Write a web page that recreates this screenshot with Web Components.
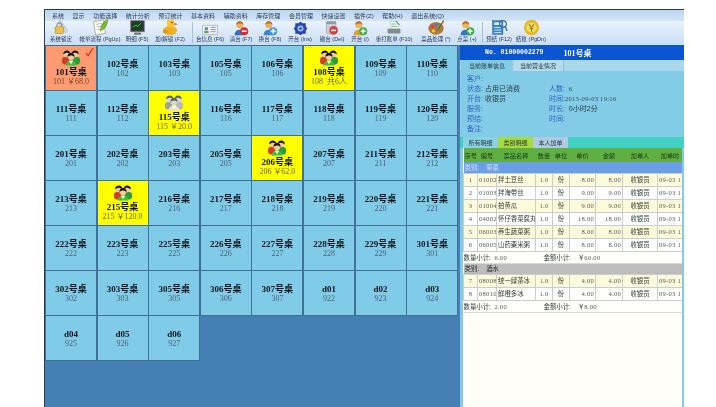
<!DOCTYPE html>
<html lang="zh">
<head>
<meta charset="utf-8">
<title>餐饮管理系统</title>
<style>
    html, body { margin: 0; padding: 0; background: #fff; }
    body { height: 407px; overflow: hidden; font-family: "Liberation Serif", "Noto Sans CJK SC", serif; }
</style>
</head>
<body>
<pos-app></pos-app>
<script>
const FONT = '"Liberation Sans", "Noto Sans CJK SC", sans-serif';
const TITLE_FONT = '"Liberation Serif", "Noto Sans CJK SC", serif';

function peopleIcon(grey) {
    const hair = grey ? '#5c5c5c' : '#141414';
    const skin = grey ? '#d8d8d8' : '#f3c9a0';
    const left = grey ? '#a0a0a0' : '#d8392a';
    const right = grey ? '#b8b8b8' : '#2e9b3a';
    const mid = grey ? '#e2e2e2' : '#3cc03c';
    return `<svg viewBox="1 1 20 19" width="18" height="17">
        <ellipse cx="5" cy="14" rx="4.2" ry="4.4" fill="${left}"/>
        <ellipse cx="17" cy="14" rx="4.2" ry="4.4" fill="${right}"/>
        <circle cx="6" cy="6.5" r="3.6" fill="${skin}"/>
        <path d="M2.2 7 C2.2 1.5 10 1.5 10 6 C7.6 4.6 4.6 5 2.2 7Z" fill="${hair}"/>
        <circle cx="16" cy="6.5" r="3.6" fill="${skin}"/>
        <path d="M12 6 C12 1.5 19.8 1.5 19.8 7 C17.4 5 14.4 4.6 12 6Z" fill="${hair}"/>
        <path d="M5 19.5 C5 12 17 12 17 19.5Z" fill="${mid}"/>
        <path d="M8.5 14 L11 18 L13.5 14Z" fill="${grey ? '#fff' : '#e8f8d0'}"/>
        <circle cx="11" cy="9.5" r="3.7" fill="${skin}"/>
        <path d="M7 10 C6.6 3.6 15.4 3.6 15 10 C13 7.8 9.6 7.6 7 10Z" fill="${hair}"/>
    </svg>`;
}

function personIcon(coat, badge, mark) {
    return `<svg viewBox="0 0 20 20" width="16" height="16">
        <path d="M2 19 C2 10 15 10 15 19Z" fill="${coat}"/>
        <circle cx="8.5" cy="6" r="4.4" fill="#f0b060"/>
        <path d="M4 6 C4 0 13 0 13 6 C11 4 7 4 4 6Z" fill="#b87020"/>
        <circle cx="14" cy="14" r="5" fill="${badge}"/>
        <rect x="11" y="13" width="6" height="2" fill="#fff"/>
        ${mark ? '<rect x="13" y="11" width="2" height="6" fill="#fff"/>' : ''}
    </svg>`;
}

const TOOL_ICONS = {
    lock: `<svg viewBox="0 0 20 20" width="18" height="17"><path d="M9 1 L18 14 L15 16 L7 5Z" fill="#d6dde6" stroke="#98a4b2" stroke-width=".6"/><path d="M5 9 C5 3 11 3 11 9" fill="none" stroke="#8a8a8a" stroke-width="1.4"/><rect x="3" y="9" width="10" height="8" rx="1" fill="#efbf45" stroke="#a9801f" stroke-width=".6"/></svg>`,
    bill: `<svg viewBox="0 0 20 20" width="18" height="18"><path d="M3 4 L14 2 L16 17 L5 19Z" fill="#fbfbf0" stroke="#8c8c7a" stroke-width=".7"/><path d="M6 7 L12 6 M6.5 10 L12.5 9 M7 13 L13 12" stroke="#8a9ab0" stroke-width=".7"/><path d="M10 15 C10 8 14 3 19 1 C19 8 15 13 10 15Z" fill="#5fae2e"/><path d="M11 14 L18 2" stroke="#e6b830" stroke-width=".9"/></svg>`,
    detail: `<svg viewBox="0 0 20 20" width="17" height="17"><rect x="2" y="2" width="16" height="13" fill="#3b3b3b" stroke="#777" stroke-width=".8"/><rect x="4" y="4" width="12" height="9" fill="#14401f"/><path d="M5 10 L8 7 L10 9 L14 5" fill="none" stroke="#55e070" stroke-width="1.1"/><rect x="6" y="16" width="8" height="2.4" fill="#6c6c6c"/></svg>`,
    duck: `<svg viewBox="0 0 20 20" width="18" height="18"><ellipse cx="10" cy="14" rx="8" ry="5" fill="#f0b020"/><circle cx="11" cy="6" r="4.5" fill="#f6c430"/><path d="M15 5.5 L19 7 L15 8Z" fill="#e0641c"/><circle cx="12.2" cy="5" r=".8" fill="#222"/><ellipse cx="5" cy="15" rx="3" ry="2" fill="#e09018"/></svg>`,
    info: `<svg viewBox="0 0 22 18" width="16" height="13"><rect x="1" y="3" width="20" height="13" fill="#eef1f4" stroke="#8c99a8" stroke-width=".7"/><circle cx="6" cy="8" r="2.4" fill="#5a88b8"/><rect x="3" y="11" width="6" height="3" fill="#6ba050"/><path d="M12 6 H19 M12 9 H19 M12 12 H19" stroke="#6c7c90" stroke-width="1"/></svg>`,
    clear: personIcon('#2f6fc4', '#d92c2c', false),
    swap: personIcon('#3f80d0', '#3f9be0', true),
    open: `<svg viewBox="0 0 20 20" width="15" height="15"><path d="M10 1 L13 3 L17 3 L17 7 L19 10 L17 13 L17 17 L13 17 L10 19 L7 17 L3 17 L3 13 L1 10 L3 7 L3 3 L7 3Z" fill="#2b46b0"/><circle cx="10" cy="10" r="4" fill="#9fc4f0"/><circle cx="10" cy="10" r="1.8" fill="#2b46b0"/></svg>`,
    cancel: `<svg viewBox="0 0 20 20" width="16" height="16"><rect x="3" y="2" width="12" height="15" rx="1" fill="#c9ced6" stroke="#8b909a" stroke-width=".6"/><rect x="3" y="2" width="12" height="3" fill="#8f99a8"/><circle cx="12" cy="13" r="5.4" fill="#d9423a"/><rect x="9" y="12" width="6" height="2" fill="#fff"/></svg>`,
    open2: personIcon('#e0a030', '#3fae3a', true),
    print: `<svg viewBox="0 0 20 20" width="16" height="16"><path d="M5 2 L14 2 L16 11 L7 11Z" fill="#fdfdfd" stroke="#98a098" stroke-width=".6"/><path d="M7 5 H13 M7.5 8 H14" stroke="#3e9a4a" stroke-width=".9"/><rect x="2" y="11" width="16" height="6" rx="1" fill="#7f8c90"/><path d="M12 1 L17 6" stroke="#5aa860" stroke-width="1.4"/></svg>`,
    dish: `<svg viewBox="0 0 20 20" width="18" height="17"><ellipse cx="10" cy="11" rx="9" ry="7.5" fill="#b07a3c"/><circle cx="6" cy="9" r="1.8" fill="#e33"/><circle cx="10" cy="7" r="1.8" fill="#3a7fe0"/><circle cx="14" cy="9" r="1.8" fill="#4cb84c"/><circle cx="7" cy="14" r="1.8" fill="#f2d030"/><path d="M12 13 L19 2" stroke="#8a5a28" stroke-width="1.6"/></svg>`,
    order: personIcon('#3274c8', '#35b040', true),
    pre: `<svg viewBox="0 0 20 20" width="17" height="17"><rect x="2" y="2" width="12" height="16" fill="#3a8ac8" stroke="#1f5a90" stroke-width=".6"/><rect x="4" y="4" width="8" height="3" fill="#e6f2fb"/><path d="M4 10 H12 M4 13 H12 M4 16 H12" stroke="#e6f2fb" stroke-width="1"/><circle cx="14" cy="6" r="4" fill="none" stroke="#3a6f9c" stroke-width="1.5"/><path d="M16.5 9 L19 14" stroke="#3a6f9c" stroke-width="1.6"/></svg>`,
    pay: `<svg viewBox="0 0 20 20" width="17" height="17"><circle cx="10" cy="10" r="9" fill="#e8b820"/><circle cx="10" cy="10" r="6" fill="#f8dc70"/><path d="M7 6 L10 10 L13 6 M10 10 V15 M7.5 11 H12.5" fill="none" stroke="#a87810" stroke-width="1.2"/></svg>`
};

class PosMenu extends HTMLElement {
    constructor() {
        super();
        this.attachShadow({mode: 'open'});
        const items = ['系统', '显示', '功能选择', '统计分析', '预订统计', '基本资料', '辅助资料', '库存管理', '会员管理', '快速设置', '插件(Z)', '帮助(H)', '退出系统(Q)'];
        this.shadowRoot.innerHTML = `
            <style>
                :host {
                    display: flex;
                    height: 11px;
                    flex: none;
                    align-items: center;
                    gap: 8.6px;
                    padding-left: 7px;
                    background: linear-gradient(#bcd6f0, #d3e5f8);
                    font: 6px ${FONT};
                    color: #2a3a58;
                    white-space: nowrap;
                }
            </style>
            ${items.map(t => `<span>${t}</span>`).join('')}
        `;
    }
}

class PosTool extends HTMLElement {
    constructor() {
        super();
        this.attachShadow({mode: 'open'});
        this.shadowRoot.innerHTML = `
            <style>
                :host {
                    display: flex;
                    flex-direction: column;
                    align-items: center;
                    justify-content: flex-end;
                    height: 100%;
                    flex: none;
                    font: 5.5px ${FONT};
                    color: #26385c;
                    white-space: nowrap;
                }
                #icon { height: 15px; display: flex; align-items: flex-end; }
                #label { height: 7px; line-height: 7px; }
            </style>
            <div id="icon"></div>
            <div id="label"><slot></slot></div>
        `;
        this.shadowRoot.querySelector('#icon').innerHTML = TOOL_ICONS[this.getAttribute('icon')];
    }
}

class PosToolbar extends HTMLElement {
    constructor() {
        super();
        this.attachShadow({mode: 'open'});
        this.shadowRoot.innerHTML = `
            <style>
                :host {
                    display: flex;
                    height: 24px;
                    flex: none;
                    padding: 0 0 2px 4px;
                    background: linear-gradient(#eaf3fd, #c9def5);
                    box-sizing: border-box;
                }
                .sep { width: 1px; margin: 1px 2px 0 5px; background: #a9bfd8; flex: none; }
            </style>
            <pos-tool icon="lock" style="width:24px">系统锁定</pos-tool>
            <pos-tool icon="bill" style="width:42px;margin-left:6px">帐单流程 (PgUp)</pos-tool>
            <pos-tool icon="detail" style="width:26px;margin-left:3px">明细 (F5)</pos-tool>
            <pos-tool icon="duck" style="width:34px;margin-left:3px">加/解锁 (F2)</pos-tool>
            <div class="sep"></div>
            <pos-tool icon="info" style="width:30px">台信息 (F6)</pos-tool>
            <pos-tool icon="clear" style="width:24px;margin-left:4px">清台 (F7)</pos-tool>
            <pos-tool icon="swap" style="width:24px;margin-left:5px">换台 (F8)</pos-tool>
            <pos-tool icon="open" style="width:26px;margin-left:5px">开台 (Ins)</pos-tool>
            <pos-tool icon="cancel" style="width:26px;margin-left:6px">撤台 (Del)</pos-tool>
            <pos-tool icon="open2" style="width:20px;margin-left:5px">开台 (/)</pos-tool>
            <pos-tool icon="print" style="width:38px;margin-left:5px">重打账单 (F10)</pos-tool>
            <pos-tool icon="dish" style="width:34px;margin-left:6px">菜品处理 (*)</pos-tool>
            <pos-tool icon="order" style="width:20px;margin-left:4px">点菜 (+)</pos-tool>
            <div class="sep"></div>
            <pos-tool icon="pre" style="width:28px">预结 (F12)</pos-tool>
            <pos-tool icon="pay" style="width:30px;margin-left:3px">结账 (PgDn)</pos-tool>
        `;
    }
}

class TableTile extends HTMLElement {
    constructor() {
        super();
        this.attachShadow({mode: 'open'});
        const state = this.getAttribute('state') || '';
        const busy = state === 'red' || state === 'yellow' || state === 'grey';
        this.shadowRoot.innerHTML = `
            <style>
                :host {
                    display: flex;
                    flex-direction: column;
                    align-items: center;
                    justify-content: center;
                    position: relative;
                    box-sizing: border-box;
                    min-width: 0;
                    background: #80cbe8;
                    outline: 1px solid #3f7196;
                    color: #1c2a38;
                    font-family: ${TITLE_FONT};
                    white-space: nowrap;
                }
                :host([state="red"]) { background: #ff9b72; }
                :host([state="yellow"]), :host([state="grey"]) { background: #ffff00; }
                #pic { height: 19px; display: flex; align-items: center; margin-top: -2px; }
                #name { font-size: 9px; font-weight: bold; line-height: 10px; color: #10161c; }
                #sub { font-size: 8px; line-height: 9px; color: #4c6274; }
                :host([state="red"]) #sub { color: #7a4428; }
                :host([state="yellow"]) #sub, :host([state="grey"]) #sub { color: #666620; }
                #check {
                    position: absolute;
                    top: 1px;
                    right: 2px;
                }
            </style>
            ${busy ? `<div id="pic">${peopleIcon(state === 'grey')}</div>` : ''}
            <div id="name"><slot></slot></div>
            <div id="sub">${this.getAttribute('sub')}</div>
            ${state === 'red' ? '<svg id="check" viewBox="0 0 10 10" width="9" height="10"><path d="M1 6 L3.5 9 L9 0.5" fill="none" stroke="#d82020" stroke-width="1.2"/></svg>' : ''}
        `;
    }
}

class TableGrid extends HTMLElement {
    constructor() {
        super();
        this.attachShadow({mode: 'open'});
        const rows = [
            ['101','102','103','105','106','108','109','110'],
            ['111','112','115','116','117','118','119','120'],
            ['201','202','203','205','206','207','211','212'],
            ['213','215','216','217','218','219','220','221'],
            ['222','223','225','226','227','228','229','301'],
            ['302','303','305','306','307']
        ];
        const special = {
            '101': ['red', '101 ￥68.0'],
            '108': ['yellow', '108&nbsp; 共6人'],
            '115': ['grey', '115 ￥20.0'],
            '206': ['yellow', '206 ￥62.0'],
            '215': ['yellow', '215 ￥120.0']
        };
        let tiles = '';
        rows.flat().forEach(n => {
            const s = special[n];
            tiles += `<table-tile sub="${s ? s[1] : n}" ${s ? `state="${s[0]}"` : ''}>${n}号桌</table-tile>`;
        });
        [['d01','922'],['d02','923'],['d03','924'],['d04','925'],['d05','926'],['d06','927']].forEach(d => {
            tiles += `<table-tile sub="${d[1]}">${d[0]}</table-tile>`;
        });
        this.shadowRoot.innerHTML = `
            <style>
                :host {
                    flex: none;
                    width: 415px;
                    box-sizing: border-box;
                    display: grid;
                    grid-template-columns: repeat(8, 50px);
                    grid-auto-rows: 44px;
                    gap: 1px 1.6px;
                    padding: 1px 0 0 1px;
                    align-content: start;
                    background: #4580b4;
                }
            </style>
            ${tiles}
        `;
    }
}

class OrderTable extends HTMLElement {
    constructor() {
        super();
        this.attachShadow({mode: 'open'});
        const g1 = [
            [1,'01002','拌土豆丝','1.0','份','8.00','8.00'],
            [2,'01003','拌海带丝','1.0','份','9.00','9.00'],
            [3,'01004','拍黄瓜','1.0','份','9.00','9.00'],
            [4,'04002','怀仔香菜腐丸','1.0','份','18.00','18.00'],
            [5,'06003','养生蔬菜粥','1.0','份','8.00','8.00'],
            [6,'06005','山药粟米粥','1.0','份','8.00','8.00']
        ];
        const g2 = [
            [7,'08008','统一绿茶冰','1.0','份','4.00','4.00'],
            [8,'08010','鲜橙多冰','1.0','份','4.00','4.00']
        ];
        const row = r => `<tr>
            <td class="c n">${r[0]}</td><td class="n">${r[1]}</td><td>${r[2]}</td>
            <td class="c n">${r[3]}</td><td class="c">${r[4]}</td>
            <td class="r n">${r[5]}</td><td class="r n">${r[6]}</td>
            <td class="c">收银员</td><td class="n">09-03 1</td></tr>`;
        const total = (q, m) => `<tr class="total"><td colspan="9">
            <span class="q">数量小计:&nbsp; <span class="n">${q}</span></span><span>金额小计:&nbsp;&nbsp;&nbsp; ￥<span class="n">${m}</span></span></td></tr>`;
        this.shadowRoot.innerHTML = `
            <style>
                :host { display: block; overflow: hidden; flex: 1; background: #fffff8; margin: 0 2px 0 3px; }
                table { border-collapse: collapse; table-layout: fixed; width: 219px; font: 6.4px ${FONT}; color: #2c3a34; }
                th, td { padding: 0 1px; white-space: nowrap; overflow: hidden; height: 13px; box-sizing: border-box; }
                th { height: 14px; background: #5faf42; color: #1e3a1a; font-weight: normal; font-size: 6.2px; border: 0; }
                td { border: 1px solid #c9cfc9; background: #fff; }
                tr.odd td { background: #fdfbdb; }
                .c { text-align: center; }
                .r { text-align: right; }
                .n { font-family: "Liberation Serif", serif; font-size: 6.6px; letter-spacing: .25px; color: #56625c; }
                tr.cat td { height: 11px; border: 0; padding-left: 1px; }
                tr.cat.blue td { background: #6a9fe8; color: #cfe2fb; }
                tr.cat.gray td { background: #bdbdbd; color: #2a2a2a; }
                tr.total td { background: #fffffb; border: 0; border-bottom: 1px solid #d8d8d8; height: 12px; padding-left: 0; }
                .q { display: inline-block; width: 80px; }
            </style>
            <table>
                <colgroup><col style="width:14px"><col style="width:19px"><col style="width:39px"><col style="width:17px"><col style="width:17px"><col style="width:26px"><col style="width:27px"><col style="width:35px"><col style="width:25px"></colgroup>
                <thead><tr>
                    <th>序号</th><th>编号</th><th>菜品名称</th><th>数量</th><th>单位</th><th>单价</th><th>金额</th><th>加单人</th><th>加单时</th>
                </tr></thead>
                <tbody>
                    <tr class="cat blue"><td colspan="9">类别:&nbsp;&nbsp;&nbsp; 荤菜</td></tr>
                </tbody>
                <tbody id="a"></tbody>
                <tbody>${total('6.00', '60.00')}<tr class="cat gray"><td colspan="9">类别:&nbsp;&nbsp;&nbsp; 酒水</td></tr></tbody>
                <tbody id="b"></tbody>
                <tbody>${total('2.00', '8.00')}</tbody>
            </table>
        `;
        const fill = (id, list) => {
            this.shadowRoot.querySelector(id).innerHTML = list.map(row).join('');
            this.shadowRoot.querySelectorAll(id + ' tr:nth-child(odd)').forEach(tr => tr.className = 'odd');
        };
        fill('#a', g1);
        fill('#b', g2);
    }
}

class OrderPanel extends HTMLElement {
    constructor() {
        super();
        this.attachShadow({mode: 'open'});
        this.shadowRoot.innerHTML = `
            <style>
                :host {
                    flex: 1;
                    min-width: 0;
                    display: flex;
                    flex-direction: column;
                    background: #82cce8;
                    font: 7px ${FONT};
                    color: #2a3a44;
                }
                header {
                    height: 15px;
                    flex: none;
                    display: flex;
                    align-items: center;
                    padding-left: 25px;
                    gap: 20px;
                    background: #0a55d2;
                    color: #fff;
                    font-weight: bold;
                    white-space: nowrap;
                }
                header b:first-child { font: bold 6.5px "Liberation Mono", monospace; }
                header b:last-child { font: bold 8px ${TITLE_FONT}; }
                .tabs { display: flex; height: 11px; padding-left: 1px; background: #a9d8e8; flex: none; }
                .tabs span { display: flex; align-items: center; justify-content: center; font-size: 6px; box-sizing: border-box; }
                .tabs .on { width: 52px; background: #82cce8; }
                .tabs .off { width: 51px; background: #b6dcec; border-right: 1px solid #8fc0d6; }
                #info {
                    flex: none;
                    height: 66px;
                    box-sizing: border-box;
                    padding: 2px 0 0 7px;
                    display: grid;
                    grid-template-columns: 82px 1fr;
                    grid-auto-rows: 10px;
                    align-items: center;
                    white-space: nowrap;
                }
                #info i { font-style: normal; color: #2e66c0; }
                #info .n { font-family: "Liberation Serif", serif; font-size: 6.6px; letter-spacing: .25px; color: #3c4c56; }
                .tabs2 { display: flex; height: 11px; padding-left: 3px; background: #42d0c2; flex: none; box-sizing: border-box; }
                .tabs2 span { width: 35px; display: flex; align-items: center; justify-content: center; font-size: 6px; }
                .tabs2 .a { background: #88d2e4; }
                .tabs2 .b { background: #a8dc3c; }
                .tabs2 .c { background: #b0cce2; }
            </style>
            <header><b>No. 01000002279</b><b>101号桌</b></header>
            <div class="tabs"><span class="on">当前账单信息</span><span class="off">当前营业情况</span></div>
            <div id="info">
                <div><i>客户:</i></div><div></div>
                <div><i>状态:</i> 占用已消费</div><div><i>人数:</i>&nbsp; <span class="n">6</span></div>
                <div><i>开台:</i> 收银员</div><div><i>时间:</i><span class="n">2013-09-03 19:16</span></div>
                <div><i>服务:</i></div><div><i>时长:</i>&nbsp; 0小时2分</div>
                <div><i>预结:</i></div><div><i>时间:</i></div>
                <div><i>备注:</i></div><div></div>
            </div>
            <div class="tabs2"><span class="a">所有明细</span><span class="b">类别明细</span><span class="c">本人加单</span></div>
            <order-table></order-table>
        `;
    }
}

class PosApp extends HTMLElement {
    constructor() {
        super();
        this.attachShadow({mode: 'open'});
        this.shadowRoot.innerHTML = `
            <style>
                :host {
                    display: flex;
                    flex-direction: column;
                    box-sizing: border-box;
                    width: 640px;
                    height: 398px;
                    margin: 9px 0 0 44px;
                    border-top: 1px solid #2b3b55;
                    border-left: 1px solid #2b3b55;
                    font-family: ${FONT};
                    filter: blur(.35px);
                }
                #main { flex: 1; display: flex; min-height: 0; }
            </style>
            <pos-menu></pos-menu>
            <pos-toolbar></pos-toolbar>
            <div id="main">
                <table-grid></table-grid>
                <order-panel></order-panel>
            </div>
        `;
    }
}

customElements.define('pos-menu', PosMenu);
customElements.define('pos-tool', PosTool);
customElements.define('pos-toolbar', PosToolbar);
customElements.define('table-tile', TableTile);
customElements.define('table-grid', TableGrid);
customElements.define('order-table', OrderTable);
customElements.define('order-panel', OrderPanel);
customElements.define('pos-app', PosApp);
</script>
</body>
</html>
